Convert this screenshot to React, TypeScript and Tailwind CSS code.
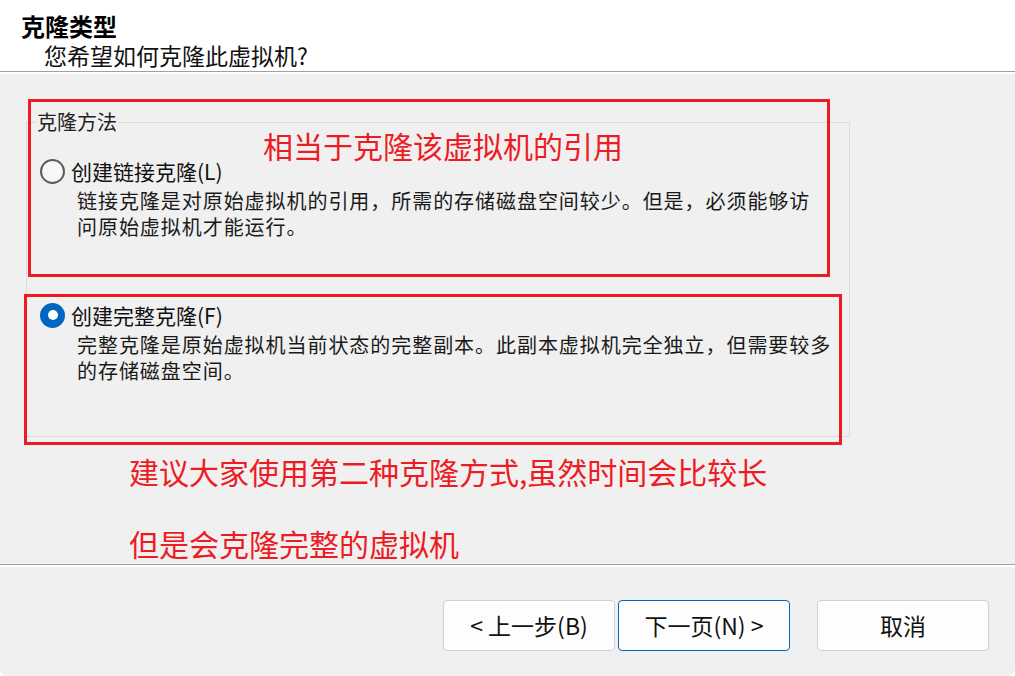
const font = { fontFamily: '"Noto Sans CJK SC", "Noto Sans", sans-serif' };

function Radio({ checked }: { checked?: boolean }) {
  if (checked) {
    return (
      <span className="flex h-[25px] w-[25px] flex-shrink-0 items-center justify-center rounded-full bg-[#0067c0]">
        <span className="h-[10px] w-[10px] rounded-full bg-white" />
      </span>
    );
  }
  return (
    <span className="h-[25px] w-[25px] flex-shrink-0 rounded-full border-[2px] border-[#5c5c5c] bg-[#f7f7f7]" />
  );
}

function Option({
  checked,
  label,
  lines,
  className,
}: {
  checked?: boolean;
  label: string;
  lines: string[];
  className?: string;
}) {
  return (
    <div className={className}>
      <div className="flex h-[26px] items-center gap-[6px]">
        <Radio checked={checked} />
        <span className="text-[21px] leading-[26px] text-[#111]">{label}</span>
      </div>
      <div className="ml-[37px] mt-[4px] text-[20px] leading-[26px] tracking-[0.95px] whitespace-nowrap text-[#1a1a1a]">
        {lines.map((l) => (
          <div key={l}>{l}</div>
        ))}
      </div>
    </div>
  );
}

function Button({
  children,
  focused,
}: {
  children: React.ReactNode;
  focused?: boolean;
}) {
  return (
    <button
      className={
        "flex h-[51px] w-[172px] items-center justify-center rounded-[4px] border bg-[#fdfdfd] text-[23px] text-[#111] " +
        (focused ? "border-[#0067c0]" : "border-[#d0d0d0]")
      }
    >
      {children}
    </button>
  );
}

export default function App() {
  return (
    <div
      className="relative h-[676px] w-[1015px] overflow-hidden rounded-b-[8px] bg-[#f0f0f0]"
      style={font}
    >
      {/* header */}
      <div className="h-[72px] border-b border-[#a0a0a0] bg-white pl-[21px] pt-[12px]">
        <div className="text-[24px] font-bold leading-[28px] text-black">克隆类型</div>
        <div className="ml-[23px] mt-[2px] text-[23px] leading-[26px] text-[#111]">
          您希望如何克隆此虚拟机?
        </div>
      </div>

      {/* body */}
      <div className="h-[492px] border-t-[2px] border-white">
        <div className="relative ml-[26px] mt-[48px] h-[315px] w-[824px] border border-[#dcdcdc] pl-[13px] pt-[35px]">
          <span className="absolute left-[9px] top-[-14px] bg-[#f0f0f0] px-[1px] text-[20px] leading-[26px] text-[#222]">
            克隆方法
          </span>
          <Option
            label="创建链接克隆(L)"
            lines={[
              "链接克隆是对原始虚拟机的引用，所需的存储磁盘空间较少。但是，必须能够访",
              "问原始虚拟机才能运行。",
            ]}
          />
          <Option
            checked
            className="mt-[62px]"
            label="创建完整克隆(F)"
            lines={[
              "完整克隆是原始虚拟机当前状态的完整副本。此副本虚拟机完全独立，但需要较多",
              "的存储磁盘空间。",
            ]}
          />
        </div>

        <div className="ml-[129px] mt-[14px] text-[30px] leading-[40px] text-[#ed1c24]">
          建议大家使用第二种克隆方式,虽然时间会比较长
        </div>
        <div className="ml-[129px] mt-[34px] text-[30px] leading-[36px] text-[#ed1c24]">
          但是会克隆完整的虚拟机
        </div>
      </div>

      {/* footer */}
      <div className="border-t border-[#a0a0a0]">
        <div className="flex justify-end border-t-[2px] border-white pr-[26px] pt-[33px]">
          <Button>&lt; 上一步(B)</Button>
          <div className="ml-[3px]">
            <Button focused>下一页(N) &gt;</Button>
          </div>
          <div className="ml-[27px]">
            <Button>取消</Button>
          </div>
        </div>
      </div>

      {/* annotations drawn over the dialog */}
      <div className="pointer-events-none absolute left-[28px] top-[99px] h-[178px] w-[802px] border-[3px] border-[#ed1c24]" />
      <div className="pointer-events-none absolute left-[24px] top-[294px] h-[151px] w-[818px] border-[3px] border-[#ed1c24]" />
      <div className="pointer-events-none absolute left-[263px] top-[125px] text-[30px] leading-[40px] text-[#ed1c24]">
        相当于克隆该虚拟机的引用
      </div>
    </div>
  );
}
